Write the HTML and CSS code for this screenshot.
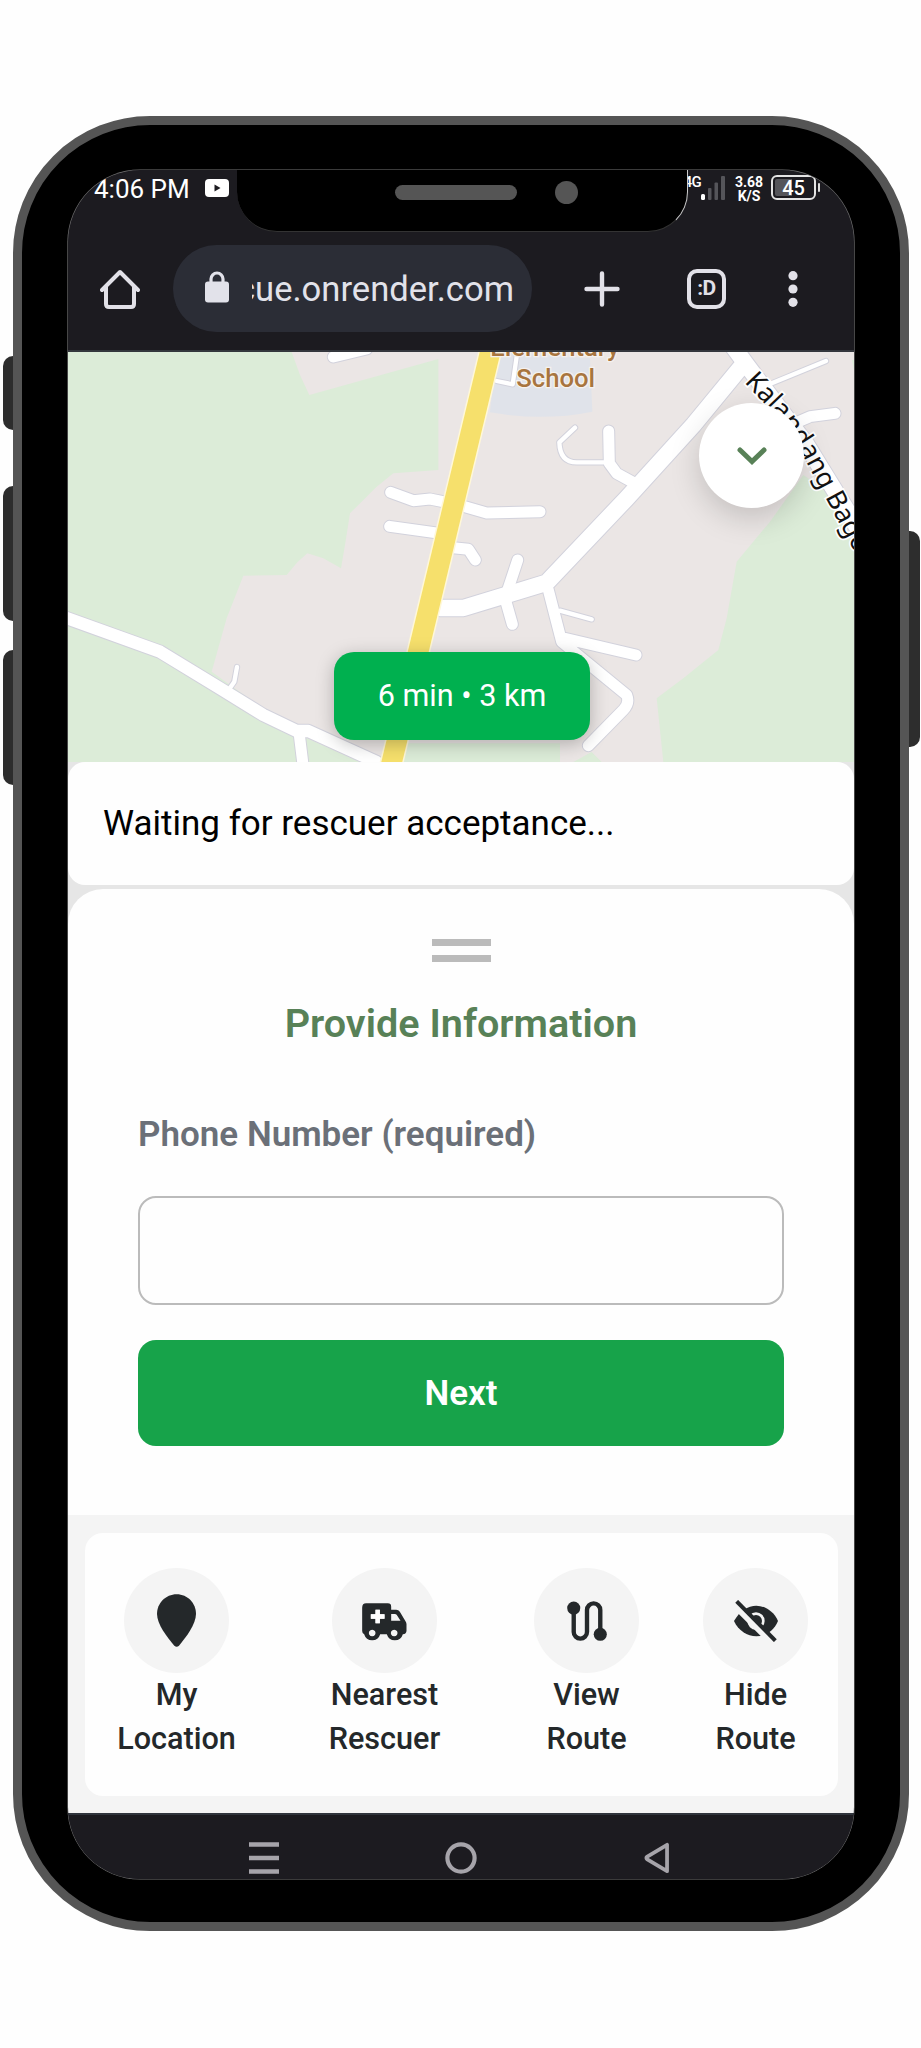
FILE: index.html
```html
<!DOCTYPE html>
<html lang="en">
<head>
<meta charset="utf-8">
<title>Rescue</title>
<link rel="stylesheet" href="styles.css">
</head>
<body>
<div class="phone">
  <span class="side-key key-mute"></span>
  <span class="side-key key-up"></span>
  <span class="side-key key-down"></span>
  <span class="side-key key-power"></span>
  <div class="notch"><span class="speaker"></span><span class="camera"></span></div>

  <main class="screen">
    <header class="statusbar">
      <span class="clock">4:06 PM</span>
      <svg class="video" viewBox="0 0 24 18"><rect width="24" height="18" rx="4" fill="#fff"/><path d="M9.500 5.500v7l6-3.500z" fill="#1c1b20"/></svg>
      <div class="indicators">
        <span class="net">4G</span>
        <svg class="signal" viewBox="0 0 24 24"><rect x="0" y="18" width="4" height="6" rx="1.500" fill="#fff"/><g fill="#55555a"><rect x="7" y="12" width="3.500" height="12" rx="1"/><rect x="13.500" y="6.500" width="3.500" height="17.500" rx="1"/><rect x="20" y="0" width="4" height="24" rx="1"/></g></svg>
        <span class="speed">3.68<br>K/S</span>
        <span class="battery">45</span>
      </div>
    </header>

    <nav class="toolbar">
      <svg class="home" viewBox="0 0 40 40" fill="none" stroke="#e2e1e8" stroke-width="4" stroke-linecap="round" stroke-linejoin="round"><path d="M2 21 20 3l18 18M6 18v17q0 3 3 3h22q3 0 3-3V18" /></svg>
      <div class="address">
        <svg class="lock" viewBox="0 0 24 32"><path d="M6 12V8a6 6 0 0 1 12 0v4" fill="none" stroke="#e2e2ea" stroke-width="3.200"/><rect y="10.500" width="24" height="21" rx="3" fill="#e2e2ea"/></svg>
        <span class="url">cue.onrender.com</span>
      </div>
      <svg class="plus" viewBox="0 0 36 36" stroke="#e2e1e8" stroke-width="4.400" stroke-linecap="round"><path d="M18 2.500v31M2.500 18h31"/></svg>
      <span class="tabs">:D</span>
      <svg class="more" viewBox="0 0 10 36" fill="#e2e1e8"><circle cx="5" cy="4.700" r="4.600"/><circle cx="5" cy="18" r="4.600"/><circle cx="5" cy="31.300" r="4.600"/></svg>
    </nav>

    <section class="map">
      <svg class="map-art" viewBox="24 21 2364 1230">
        <rect x="24" y="21" width="2364" height="1230" fill="#ebe6e5"/>
        <g fill="#dcecd8">
          <path d="M24 21H695L720 90 748 150 1135 42V375L1000 385 950 425 870 505 855 600 843 670 790 640 742 625 712 652 680 690 550 692 500 820 455 980 720 1170 900 1251H24z"/>
          <path d="M1020 1195H1500V1251H1020zM1540 1251l55-30 30 30z"/>
          <path d="M2388 610V1251H1810L1790 1060 1870 1000 1975 915 2000 820 2030 650 2130 530 2230 390 2290 430z"/>
          <path d="M2376 45h12v60z"/>
        </g>
        <path d="M1310 21 1590 40 1597 200Q1450 230 1290 202z" fill="#e0e3ea"/>
        <g class="casing"><use href="#roads-s"/><use href="#roads-m"/><use href="#roads-l"/></g>
        <g class="fill">
          <g id="roads-s">
            <path class="w14" d="M502 1040 523 1010 531 966M1310 108 1358 118 1372 21M1545 248 1498 292Q1500 352 1550 352H1640M1500 797 1595 823M2135 115 2298 48"/>
          </g>
          <g id="roads-m">
            <path class="w34" d="M992 442 1060 467 1110 462 1160 472M989 544 1140 565M1215 485 1280 504 1440 500M1180 608 1225 613 1246 645M1646 258 1648 355 1670 385 1725 415M1373 645 1335 760 1357 838M1465 735 1505 890 1700 1050Q1710 1075 1690 1095L1585 1202M1505 878 1728 930M718 1170 728 1251M820 36 920 12M2170 250 2250 215 2325 205"/>
          </g>
          <g id="roads-l">
            <path class="w38" d="M0 812 300 920 480 1030 610 1110 710 1158 745 1158 950 1251"/>
            <path class="w50" d="M1140 789H1210L1460 713 1700 460 1900 240 2052 55M2016 0 2060 60 2240 300 2400 560"/>
          </g>
        </g>
        <path d="M1298-10 986 1290" stroke="#fff8d8" stroke-width="70"/>
        <path d="M1298-10 986 1290" stroke="#f6e06c" stroke-width="61"/>
        <g class="place"><text x="1485" y="33">Elementary</text><text x="1487" y="125">School</text></g>
        <path id="street" d="M2052 112 2160 225 2225 325 2300 465 2400 650" fill="none"/>
        <text class="street"><textPath href="#street">Kalandang Bago</textPath></text>
      </svg>
      <button class="collapse"><svg viewBox="0 0 30 20"><path d="M3 4 15 15.500 27 4" fill="none" stroke="#588157" stroke-width="5" stroke-linecap="round" stroke-linejoin="miter"/></svg></button>
      <div class="eta">6 min • 3 km</div>
    </section>

    <div class="below">
      <p class="notice">Waiting for rescuer acceptance...</p>
      <section class="panel">
        <div class="handle"></div>
        <h1>Provide Information</h1>
        <label for="phone">Phone Number (required)</label>
        <input id="phone" type="tel">
        <button class="next">Next</button>
      </section>
    </div>

    <section class="dock">
      <div class="actions">
        <div class="action">
          <span class="disc"><svg style="width:39px;height:53px" viewBox="291 282 117 158"><path d="M350 282c33 0 58 27 58 59 0 32-30 70-51 96q-7 6-14 0c-22-27-52-64-52-96 0-32 26-59 59-59z"/></svg></span>
          My<br>Location
        </div>
        <div class="action a2">
          <span class="disc"><svg style="width:45px;height:38px;margin-top:2px" viewBox="908 309 134 114"><path fill-rule="evenodd" d="M920 310h65q10 0 10 10v9h15q7 0 11 6l17 29q3 4 3 9v19q0 9-11 11a25 25 0 0 1-48 0h-20a25 25 0 0 1-48 0q-6-3-6-10v-70q0-13 12-13zM995 342v20h28l-11-17q-2-3-6-3zM948 329v14h-14v13h14v14h13v-14h14v-13h-14v-14zM938 389a10 10 0 1 0 .1 0zM1004 389a10 10 0 1 0 .1 0z"/><path d="M948 329h13v14h14v13h-14v14h-13v-14h-14v-13h14z" fill="#fff"/></svg></span>
          Nearest<br>Rescuer
        </div>
        <div class="action a3">
          <span class="disc"><svg style="width:40px;height:40px" viewBox="349 302 119 119"><circle cx="369" cy="323" r="19.500"/><circle cx="448" cy="401" r="19.500"/><path d="M369 323v71a19.700 19.700 0 0 0 39.500 0v-65a19.700 19.700 0 0 1 39.500 0v72" fill="none" stroke="#24282a" stroke-width="13"/></svg></span>
          View<br>Route
        </div>
        <div class="action a4">
          <span class="disc"><svg style="width:44px;height:42px" viewBox="849 299 132 126"><path d="M849 362C865 333 891 316 916 316s53 17 65 46c-12 29-38 46-65 46s-54-17-67-46z"/><circle cx="915" cy="362" r="22" fill="none" stroke="#f4f4f4" stroke-width="8"/><path d="M838 303 978 443" stroke="#f4f4f4" stroke-width="18"/><path d="M857 303 973 421" stroke="#24282a" stroke-width="12"/></svg></span>
          Hide<br>Route
        </div>
      </div>
    </section>

    <footer class="navbar">
      <svg viewBox="0 0 30 32" stroke="#a6a4aa" stroke-width="4.400"><path d="M0 2.500h30M0 16h30M0 29.500h30"/></svg>
      <svg viewBox="0 0 32 32"><circle cx="16" cy="16" r="13.600" fill="none" stroke="#a6a4aa" stroke-width="4.200"/></svg>
      <svg viewBox="0 0 28 34"><path d="M24.500 3v28L3.500 18.500q-2-1.500 0-3z" fill="none" stroke="#a6a4aa" stroke-width="4" stroke-linejoin="round"/></svg>
    </footer>
  </main>
</div>
</body>
</html>
```
FILE: styles.css
```css
* { box-sizing: border-box; }
body { margin: 0; padding: 116px 0 0 13px; background: #fefefe; font-family: Roboto, "Noto Sans", sans-serif; }
svg { display: block; flex: none; }
button { border: 0; padding: 0; font: inherit; }

.phone { position: relative; width: 896px; height: 1815px; padding: 45px 46px 43px; border: 9px solid #555; border-radius: 137px; background: #000; }
.side-key { position: absolute; left: -19px; width: 10px; border-radius: 10px 0 0 10px; background: #2d2d2d; }
.key-mute { top: 231px; height: 74px; }
.key-up { top: 361px; height: 135px; }
.key-down { top: 525px; height: 135px; }
.key-power { left: auto; right: -20px; width: 11px; top: 406px; height: 216px; border-radius: 0 10px 10px 0; }
.notch { position: absolute; z-index: 2; left: 215px; top: 40px; width: 451px; height: 67px; padding: 20px 0 0 158px; display: flex; align-items: flex-start; gap: 38px; background: #000; border-radius: 0 0 40px 40px; border-right: 1px solid #ccc; border-bottom: 1px solid #333; clip-path: inset(5px 0 0 0); }
.speaker { width: 122px; height: 15px; border-radius: 8px; background: #555; }
.camera { width: 23px; height: 23px; margin-top: -4px; border-radius: 50%; background: #555; }

.screen { display: flex; flex-direction: column; height: 1709px; border-radius: 72px; overflow: hidden; background: #1c1b20; box-shadow: 0 0 0 .6px #777; }

.statusbar { height: 62px; padding: 4px 38px 0 26px; display: flex; align-items: flex-start; color: #fff; }
.clock { font-size: 26px; line-height: 31px; }
.video { width: 24px; height: 18px; margin: 5px 0 0 15px; }
.indicators { margin-left: auto; display: flex; align-items: flex-start; }
.net { font-size: 15px; line-height: 17px; font-weight: 500; letter-spacing: -.8px; }
.signal { width: 24px; height: 24px; margin: 2px 9px 0 0; }
.speed { width: 30px; margin-top: 1px; text-align: center; font-size: 14px; line-height: 14px; font-weight: 700; letter-spacing: -.1px; }
.battery { position: relative; width: 45px; height: 25px; margin: 1px 0 0 7px; border: 2px solid #e4e4e4; border-radius: 6px; background: linear-gradient(90deg, #55555a 17px, transparent 17px) content-box; padding: 2px; text-align: center; font-size: 20px; line-height: 18px; font-weight: 500; }
.battery::after { content: ""; position: absolute; right: -6px; top: 6px; width: 2px; height: 9px; background: #ddd; border-radius: 1px; }

.toolbar { height: 120px; padding: 14px 56px 19px 32px; display: flex; align-items: center; border-bottom: 2px solid #34373d; }
.home { width: 40px; height: 40px; }
.address { width: 359px; height: 87px; margin-left: 33px; padding: 0 18px 0 32px; display: flex; align-items: center; border-radius: 44px; background: #2b2d36; }
.lock { width: 24px; height: 32px; margin-bottom: 3px; }
.url { flex: 1; margin-left: 23px; display: flex; justify-content: flex-end; overflow: hidden; font-size: 34.600px; color: #e2e2ea; }
.plus { width: 36px; height: 36px; margin-left: 52px; }
.tabs { width: 39px; height: 40px; margin-left: 67px; border: 4px solid #e2e1e8; border-radius: 10px; color: #e2e1e8; font-size: 21px; font-weight: 700; line-height: 30px; text-align: center; letter-spacing: -.5px; }
.more { width: 10px; height: 36px; margin-left: auto; }

.map { position: relative; height: 410px; }
.map-art { width: 788px; height: 410px; }
.fill, .casing { fill: none; stroke-linecap: round; stroke-linejoin: round; }
.fill { stroke: #fff; --edge: 0px; }
.casing { stroke: #d2d2dc; --edge: 6px; }
.w14 { stroke-width: calc(13px + var(--edge)); }
.w34 { stroke-width: calc(33px + var(--edge)); }
.w38 { stroke-width: calc(37px + var(--edge)); }
.w50 { stroke-width: calc(49px + var(--edge)); }
.place { font: 500 77px Roboto, sans-serif; fill: #a8753f; text-anchor: middle; stroke: #f5f1ee; stroke-width: 8px; paint-order: stroke; }
.street { font: 400 80px "Noto Sans", sans-serif; fill: #111; stroke: #fff; stroke-width: 10px; paint-order: stroke; }
.collapse { position: absolute; left: 631px; top: 51px; width: 105px; height: 105px; border-radius: 50%; background: #fff; display: grid; place-items: center; box-shadow: 0 10px 30px rgba(0, 0, 0, .17); }
.collapse svg { width: 30px; height: 20px; }
.eta { position: absolute; left: 266px; top: 300px; width: 256px; height: 88px; border-radius: 20px; background: #00b04f; color: #fff; font-size: 30.600px; line-height: 87px; text-align: center; box-shadow: 0 4px 18px rgba(0, 0, 0, .25); }

.below { height: 753px; background: #e6e6e6; }
.notice { margin: 0; height: 123px; padding-left: 35px; border-radius: 17px; background: #fefefe; color: #000; font-size: 35px; line-height: 123px; }
.panel { margin-top: 4px; height: 626px; padding: 50px 70px 0; border-radius: 35px 35px 0 0; background: #fefefe; display: flex; flex-direction: column; }
.handle { align-self: center; width: 59px; height: 23px; border: solid #bbb; border-width: 7.500px 0; }
.panel h1 { margin: 40px 0 0; font-size: 39.600px; line-height: 44px; font-weight: 600; text-align: center; color: #588157; }
.panel label { margin-top: 67px; font-size: 35px; line-height: 44px; font-weight: 600; color: #6b7078; }
.panel input { margin: 39px 0 0; height: 109px; border: 2px solid #bbb; border-radius: 18px; background: #fefefe; }
.next { margin-top: 35px; height: 106px; border-radius: 18px; background: #17a34a; color: #fff; font-size: 35px; font-weight: 600; }

.dock { height: 298px; padding: 18px 16px 0 17px; background: #f4f4f4; }
.actions { height: 263px; padding: 35px 0 0 32px; display: flex; border-radius: 18px; background: #fefefe; }
.action { width: 119px; text-align: center; font-size: 30.600px; line-height: 43.700px; font-weight: 500; color: #24282a; }
.a2 { margin-left: 89px; }
.a3 { width: 105px; margin-left: 90px; }
.a4 { width: 105px; margin-left: 64px; }
.disc { width: 105px; height: 105px; margin: 0 auto; display: flex; align-items: center; justify-content: center; border-radius: 50%; background: #f4f4f4; }
.disc svg { fill: #24282a; }

.navbar { height: 66px; padding: 22px 184px 0 181px; display: flex; justify-content: space-between; align-items: center; border-top: 2px solid #30343c; background: #1c1b20; }
.navbar svg { height: 32px; }
```
